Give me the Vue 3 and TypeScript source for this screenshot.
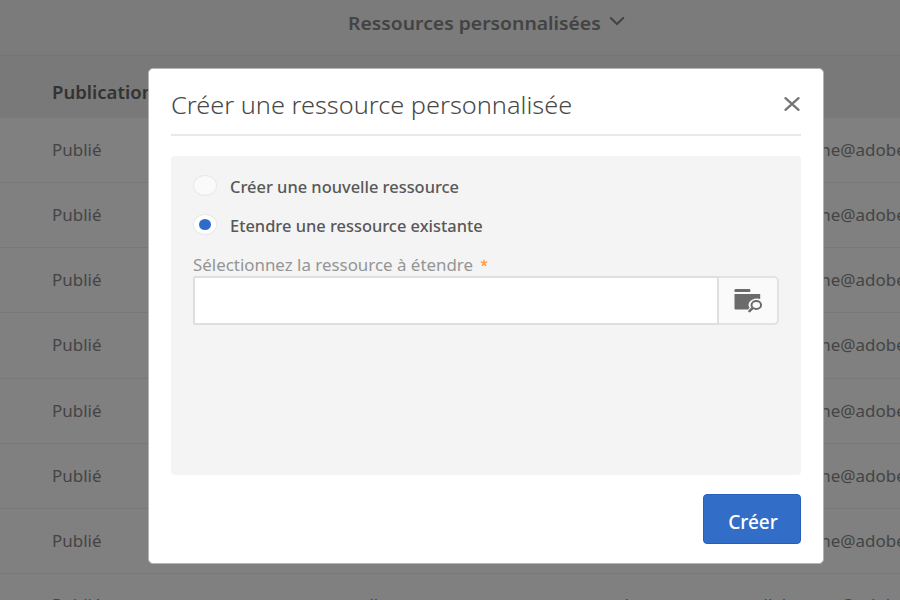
<script setup lang="ts">
import { ref } from 'vue'

interface Row {
  status: string
  label: string
  kind: string
  author: string
}

const author = 'ellabrunne@adobe.com'
const rows: Row[] = [
  ...Array.from({ length: 7 }, () => ({ status: 'Publié', label: '', kind: '', author })),
  { status: 'Publié', label: 'collecte', kind: 'code', author },
]

const mode = ref<'create' | 'extend'>('extend')
const resource = ref('')
</script>

<template>
  <div class="screen">
    <header class="topbar">
      <div class="topbar-title"><span>Ressources personnalisées</span></div>
      <svg class="chevron" viewBox="0 0 16 10"><path d="M1.2 1.5 8 8l6.800-6.500" /></svg>
    </header>
    <div class="columns"><span>Publication</span></div>
    <div v-for="(row, i) in rows" :key="i" class="row" :class="{ last: i === rows.length - 1 }">
      <div><span>{{ row.status }}</span></div>
      <div><span v-if="row.label">{{ row.label }}</span></div>
      <div><span v-if="row.kind">{{ row.kind }}</span></div>
      <div><span>{{ row.author }}</span></div>
    </div>

    <div class="overlay">
      <section class="dialog" role="dialog">
        <div class="dialog-head">
          <h1><span>Créer une ressource personnalisée</span></h1>
          <svg class="close" viewBox="0 0 16 14"><path d="M1.500 1.200 14.500 12.800M14.500 1.200 1.500 12.800" /></svg>
        </div>
        <div class="panel">
          <label class="option" @click="mode = 'create'">
            <i class="radio" :class="{ on: mode === 'create' }"></i>
            <span>Créer une nouvelle ressource</span>
          </label>
          <label class="option" @click="mode = 'extend'">
            <i class="radio" :class="{ on: mode === 'extend' }"></i>
            <span>Etendre une ressource existante</span>
          </label>
          <div class="field-label">
            <div class="field-text"><span>Sélectionnez la ressource à étendre</span></div>
            <svg class="star" viewBox="0 0 10 10"><path d="M5 5V.8M5 5 .9 3.700M5 5l4.100-1.300M5 5 2.500 8.500M5 5l2.500 3.500" /></svg>
          </div>
          <div class="picker">
            <input v-model="resource" type="text" />
            <button class="browse">
              <svg viewBox="0 0 30 26">
                <path class="solid" d="M1.500 0h13.800q1 0 1 1v2H.5V1q0-1 1-1zM.5 5h25.700v4.900Q21.500 8.800 17.700 11q-4 2.500-3 6.500l1 1.300L14 20.500H1.500q-1 0-1-1z" />
                <ellipse cx="22.300" cy="16" rx="4.800" ry="4" />
                <path class="handle" d="m18.300 19.300-2.800 2.800" />
              </svg>
            </button>
          </div>
        </div>
        <div class="actions"><button class="primary">Créer</button></div>
      </section>
    </div>
  </div>
</template>

<style>
body {
  margin: 0;
  overflow: hidden;
}
</style>

<style scoped>
* {
  box-sizing: border-box;
}
.screen {
  position: relative;
  width: 900px;
  height: 600px;
  overflow: hidden;
  background: #808080;
  color: #444;
  font-family: 'Noto Sans', 'Open Sans', sans-serif;
  font-size: 16px;
}
span {
  display: inline-block;
  white-space: nowrap;
  transform-origin: left center;
}
.topbar {
  display: flex;
  align-items: center;
  gap: 8px;
  height: 56px;
  padding: 0 0 10px 348px;
  background: #7b7b7b;
  border-bottom: 1px solid #757575;
}
.topbar-title {
  width: 253px;
  font-size: 18px;
  font-weight: 600;
  color: #434343;
}
.topbar-title span {
  transform: scaleX(1.075);
}
.chevron {
  width: 16px;
  height: 10px;
  margin-top: -4px;
  fill: none;
  stroke: #434343;
  stroke-width: 2;
}
.columns {
  display: flex;
  align-items: center;
  height: 62px;
  padding: 10px 0 0 52px;
  background: #797979;
  font-size: 17px;
  font-weight: 600;
  color: #333;
}
.columns span {
  transform: scaleX(1.09);
}
.row {
  display: grid;
  grid-template-columns: 299px 249px 154px 1fr;
  align-items: center;
  height: 65.15px;
  padding-left: 52px;
  border-bottom: 1px solid #787878;
}
.row span {
  transform: scaleX(1.06);
}
.row.last {
  padding-bottom: 2px;
}
.overlay {
  position: absolute;
  inset: 0;
  display: flex;
  align-items: flex-start;
  padding: 68px 0 0 148px;
}
.dialog {
  width: 676px;
  height: 496px;
  padding: 0 22px;
  background: #fff;
  border: 1px solid #b4b4b4;
  border-radius: 5px;
}
.dialog-head {
  display: flex;
  align-items: center;
  justify-content: space-between;
  height: 67px;
  padding-top: 5px;
  margin-bottom: 20px;
  border-bottom: 2px solid #e9e9e9;
}
h1 {
  margin: 0;
  font-size: 24px;
  font-weight: 300;
  color: #484848;
}
h1 span {
  transform: scaleX(1.055);
}
.close {
  width: 16px;
  height: 14px;
  margin-right: 1px;
  fill: none;
  stroke: #757575;
  stroke-width: 2.300;
  stroke-linecap: round;
}
.panel {
  height: 319px;
  padding: 20px 22px 0;
  background: #f4f4f4;
  border-radius: 4px;
}
.option {
  display: flex;
  align-items: center;
  gap: 12.500px;
  height: 22px;
  margin-bottom: 17px;
  color: #585858;
  font-weight: 500;
}
.option span {
  transform: scaleX(1.026);
}
.radio {
  flex: none;
  display: flex;
  align-items: center;
  justify-content: center;
  width: 24px;
  height: 21px;
  margin-bottom: 3px;
  background: #fafafa;
  border: 1px solid #e9e9e9;
  border-radius: 50%;
}
.radio.on {
  background: #fff;
}
.radio.on::after {
  content: '';
  width: 12px;
  height: 11px;
  border-radius: 50%;
  background: #2f6bc9;
}
.field-label {
  display: flex;
  align-items: center;
  gap: 7px;
  height: 23px;
  margin-top: -1px;
  color: #959595;
}
.field-text {
  width: 280px;
}
.field-text span {
  transform: scaleX(1.056);
}
.star {
  width: 8px;
  height: 8px;
  margin-top: -3px;
  fill: none;
  stroke: #ff9b45;
  stroke-width: 1.700;
}
.picker {
  display: flex;
  width: 586px;
  height: 49px;
}
input {
  flex: 1;
  min-width: 0;
  border: 2px solid #dfdfdf;
  border-radius: 2px 0 0 2px;
  background: #fff;
  outline: none;
}
.browse {
  display: flex;
  align-items: center;
  justify-content: center;
  width: 60px;
  padding: 2px 0 0 2px;
  border: 2px solid #e2e2e2;
  border-left: 0;
  border-radius: 0 5px 5px 0;
  background: #fafafa;
}
.browse svg {
  width: 30px;
  height: 26px;
}
.solid {
  fill: #6b6b6b;
}
.browse ellipse,
.handle {
  fill: none;
  stroke: #6b6b6b;
  stroke-width: 2;
}
.handle {
  stroke-width: 2.500;
  stroke-linecap: round;
}
.actions {
  display: flex;
  justify-content: flex-end;
  padding-top: 19px;
}
.primary {
  width: 98px;
  height: 50px;
  padding: 6px 0 0 2px;
  border: 1px solid #285fbd;
  border-radius: 4px;
  background: #326ec8;
  color: #fff;
  font-family: inherit;
  font-size: 19px;
  font-weight: 500;
}
</style>
